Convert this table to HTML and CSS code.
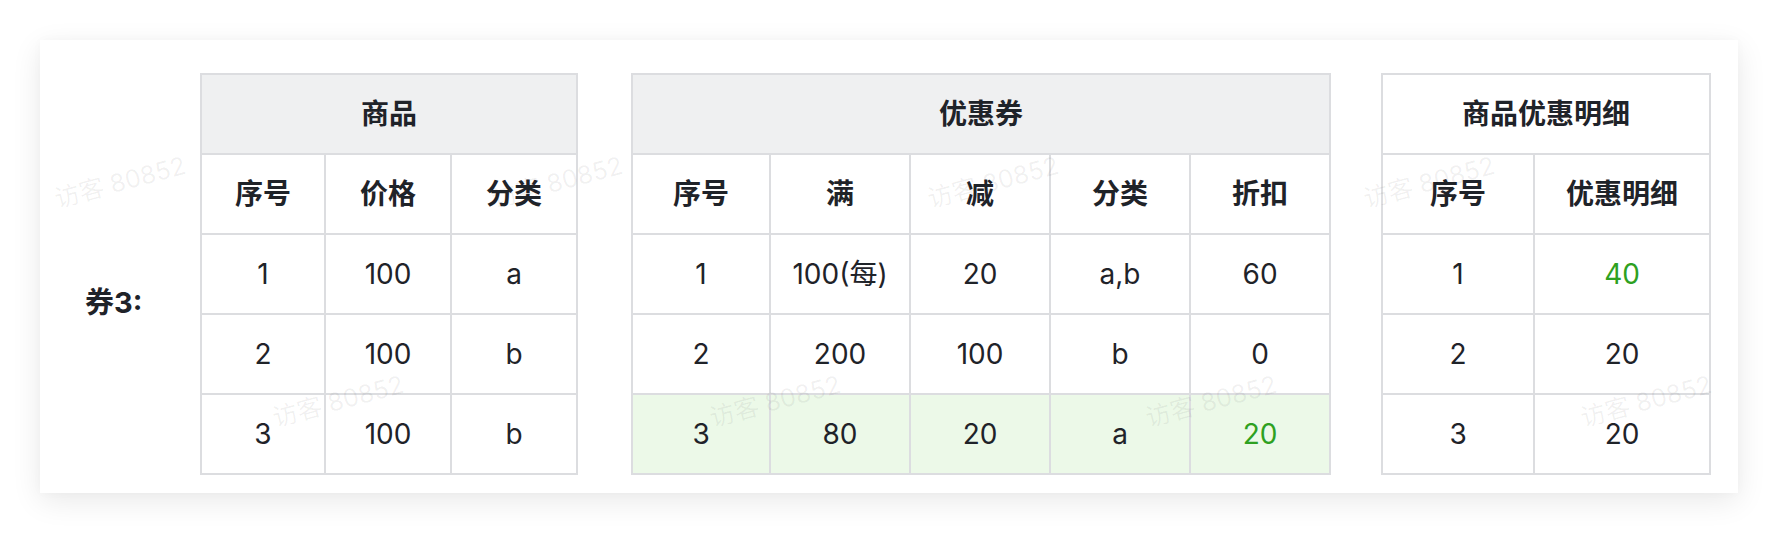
FILE: index.html
```html
<!DOCTYPE html>
<html lang="zh-CN">
<head>
<meta charset="utf-8">
<title>券3</title>
<link rel="stylesheet" href="styles.css">
</head>
<body>
<div class="card">
  <div class="label">券3:</div>

  <table class="tbl tbl-goods">
    <colgroup><col class="w124"><col class="w126"><col class="w126"></colgroup>
    <thead>
      <tr><th colspan="3" class="group">商品</th></tr>
      <tr><th>序号</th><th>价格</th><th>分类</th></tr>
    </thead>
    <tbody>
      <tr><td>1</td><td>100</td><td>a</td></tr>
      <tr><td>2</td><td>100</td><td>b</td></tr>
      <tr><td>3</td><td>100</td><td>b</td></tr>
    </tbody>
  </table>

  <table class="tbl tbl-coupon">
    <colgroup><col class="w138"><col class="w140"><col class="w140"><col class="w140"><col class="w140"></colgroup>
    <thead>
      <tr><th colspan="5" class="group">优惠券</th></tr>
      <tr><th>序号</th><th>满</th><th>减</th><th>分类</th><th>折扣</th></tr>
    </thead>
    <tbody>
      <tr><td>1</td><td>100(每)</td><td>20</td><td>a,b</td><td>60</td></tr>
      <tr><td>2</td><td>200</td><td>100</td><td>b</td><td>0</td></tr>
      <tr class="hit"><td>3</td><td>80</td><td>20</td><td>a</td><td class="green">20</td></tr>
    </tbody>
  </table>

  <table class="tbl tbl-detail">
    <colgroup><col class="w152"><col class="w176"></colgroup>
    <thead>
      <tr><th colspan="2" class="group plain">商品优惠明细</th></tr>
      <tr><th>序号</th><th>优惠明细</th></tr>
    </thead>
    <tbody>
      <tr><td>1</td><td class="green">40</td></tr>
      <tr><td>2</td><td>20</td></tr>
      <tr><td>3</td><td>20</td></tr>
    </tbody>
  </table>
</div>

<div class="watermarks" aria-hidden="true">
  <span class="wm wm-a1">访客 80852</span>
  <span class="wm wm-a2">访客 80852</span>
  <span class="wm wm-a3">访客 80852</span>
  <span class="wm wm-a4">访客 80852</span>
  <span class="wm wm-b1">访客 80852</span>
  <span class="wm wm-b2">访客 80852</span>
  <span class="wm wm-b3">访客 80852</span>
  <span class="wm wm-b4">访客 80852</span>
</div>
</body>
</html>
```

FILE: styles.css
```css
* { box-sizing: border-box; }

html, body {
  margin: 0;
  padding: 0;
  background: #ffffff;
}

body {
  position: relative;
  width: 1778px;
  height: 534px;
  overflow: hidden;
  font-family: "Inter", "Noto Sans CJK SC", sans-serif;
  color: #1f2329;
}

.card {
  margin: 40px 40px 0 40px;
  height: 453px;
  padding: 33px 27px 18px 45px;
  background: #ffffff;
  display: flex;
  align-items: flex-start;
  box-shadow: 0 8px 28px rgba(0, 0, 0, 0.09), 0 0 10px rgba(0, 0, 0, 0.025);
}

.label {
  width: 115px;
  flex: none;
  margin-top: 210px;
  font-size: 29px;
  line-height: 40px;
  font-weight: 700;
}

.tbl {
  flex: none;
  table-layout: fixed;
  border-collapse: separate;
  border-spacing: 0;
  border-top: 2px solid #dcdde0;
  border-left: 2px solid #dcdde0;
}

.tbl-goods { width: 378px; }
.tbl-coupon { width: 700px; margin-left: 53px; }
.tbl-detail { width: 330px; margin-left: 50px; }

.w124 { width: 124px; }
.w126 { width: 126px; }
.w138 { width: 138px; }
.w140 { width: 140px; }
.w152 { width: 152px; }
.w176 { width: 176px; }

.tbl th,
.tbl td {
  height: 80px;
  padding: 0;
  text-align: center;
  vertical-align: middle;
  font-size: 28px;
  line-height: 36px;
  border-right: 2px solid #dcdde0;
  border-bottom: 2px solid #dcdde0;
  background: #ffffff;
  white-space: nowrap;
}

.tbl th {
  font-weight: 600;
}

.tbl td {
  font-weight: 400;
}

.tbl th.group {
  background: #eff0f1;
}

.tbl th.group.plain {
  background: #ffffff;
}

.tbl tr.hit td {
  background: #ecf9e8;
}

.tbl td.green {
  color: #2ea121;
}

.watermarks {
  position: absolute;
  left: 0;
  top: 0;
  width: 100%;
  height: 100%;
  pointer-events: none;
}

.wm {
  position: absolute;
  transform: translate(-50%, -50%) rotate(-15deg);
  white-space: nowrap;
  font-family: "Inter", "Noto Sans CJK SC", sans-serif;
  font-size: 25px;
  line-height: 30px;
  color: rgba(31, 35, 41, 0.065);
}

.wm-a1 { left: 120px; top: 182px; }
.wm-a2 { left: 557px; top: 182px; }
.wm-a3 { left: 993px; top: 182px; }
.wm-a4 { left: 1429px; top: 182px; }
.wm-b1 { left: 338px; top: 401px; }
.wm-b2 { left: 775px; top: 401px; }
.wm-b3 { left: 1211px; top: 401px; }
.wm-b4 { left: 1646px; top: 401px; }
```
